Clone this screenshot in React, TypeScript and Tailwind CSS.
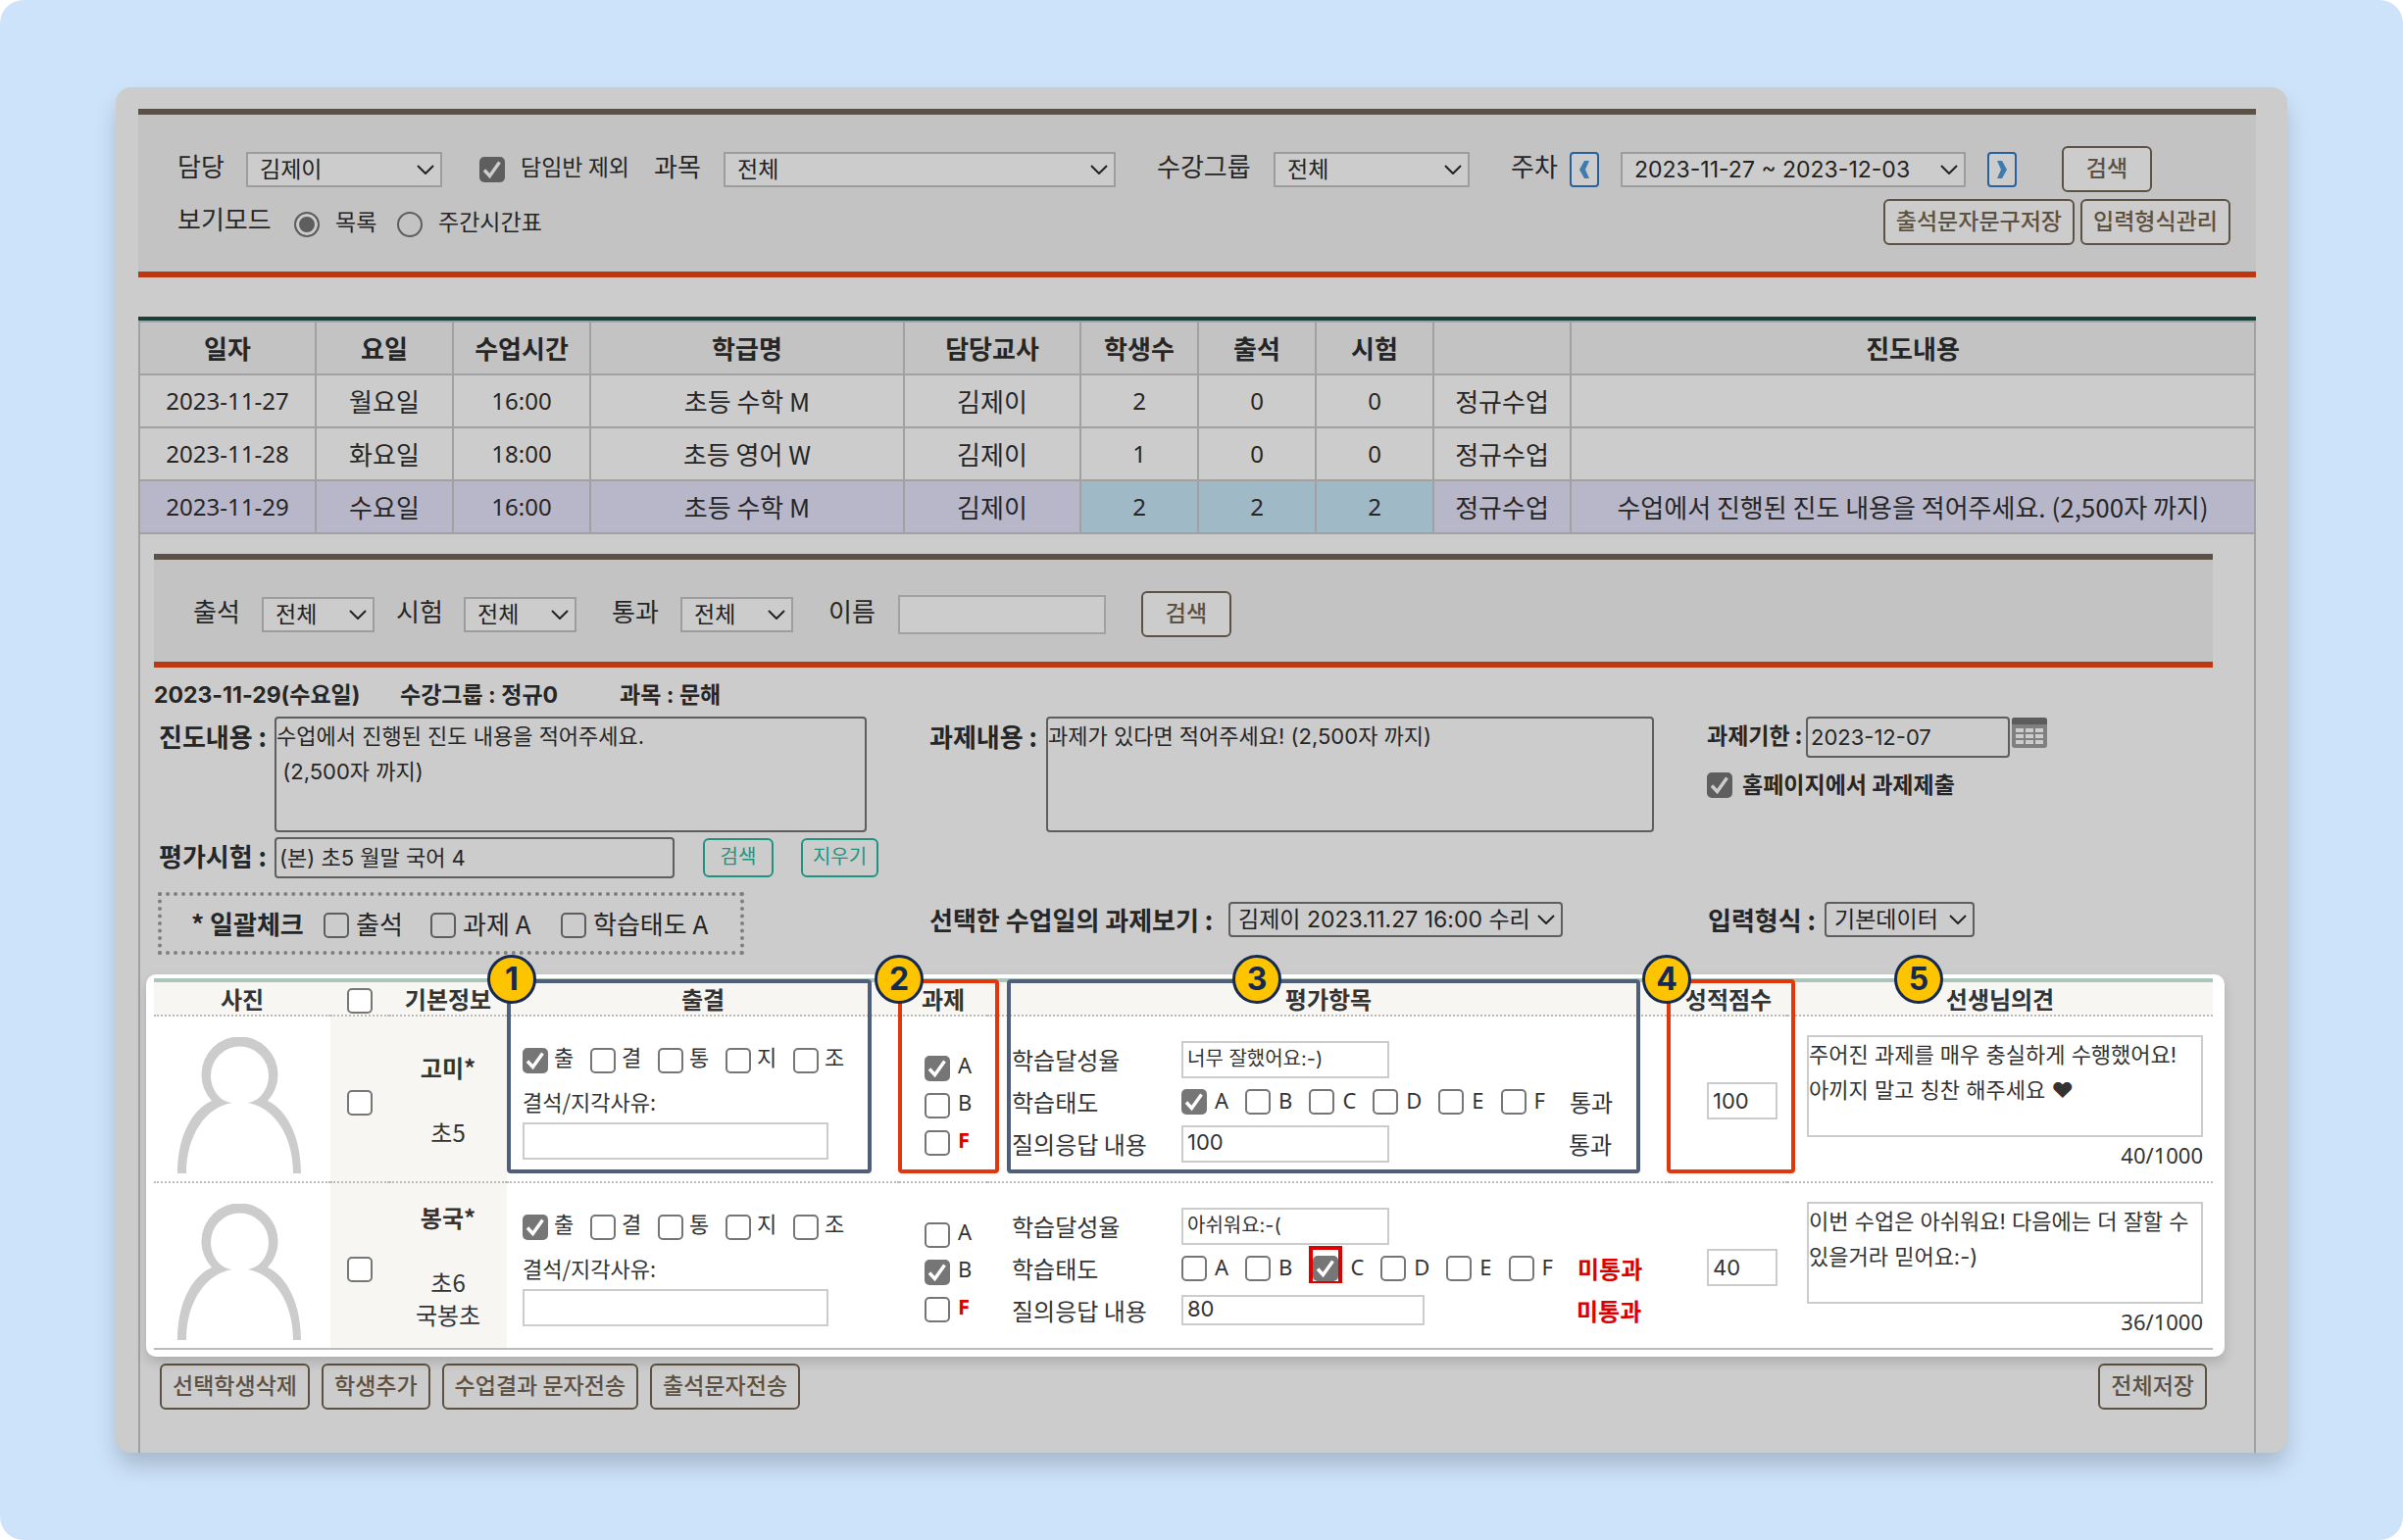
import React from "react";

const ui = "font-['Inter','Noto_Sans_CJK_KR',sans-serif]";

type Tone = "dim" | "light";

function Check({
  label,
  checked,
  tone = "light",
  className = "",
}: {
  label: string;
  checked?: boolean;
  tone?: Tone;
  className?: string;
}) {
  const look =
    tone === "dim"
      ? "border-[#5e5e5e] checked:bg-[#5e5e5e]"
      : "border-[#767676] bg-white checked:bg-[#767676]";
  return (
    <span className={`relative block size-[26px] shrink-0 ${className}`}>
      <input
        type="checkbox"
        aria-label={label}
        defaultChecked={checked}
        className={`peer block size-[26px] appearance-none rounded-[5px] border-2 ${look}`}
      />
      <svg
        viewBox="0 0 26 26"
        className={`pointer-events-none absolute inset-0 hidden peer-checked:block ${
          tone === "dim" ? "text-[#cccccc]" : "text-white"
        }`}
        fill="none"
        stroke="currentColor"
        strokeWidth="3.4"
      >
        <path d="M5 13.5 10.5 19.5 20.5 5.5" />
      </svg>
    </span>
  );
}

function Picker({
  label,
  value,
  className,
  pad = "pl-3",
}: {
  label: string;
  value: string;
  className: string;
  pad?: string;
}) {
  return (
    <span className={`relative block shrink-0 ${className}`}>
      <select
        aria-label={label}
        defaultValue={value}
        className={`block size-full appearance-none rounded-[inherit] border-2 border-inherit bg-[#cccccc] ${pad} ${ui} text-[23px] leading-8 text-[#222222]`}
      >
        <option>{value}</option>
      </select>
      <svg
        viewBox="0 0 18 10"
        className="pointer-events-none absolute top-[13px] right-2 h-[10px] w-[18px]"
        fill="none"
        stroke="#222222"
        strokeWidth="2"
      >
        <path d="M1 1 9 9 17 1" />
      </svg>
    </span>
  );
}

function BrownButton({ children, wide }: { children: React.ReactNode; wide?: boolean }) {
  return (
    <button
      type="button"
      className={`h-[47px] shrink-0 rounded-[6px] border-2 border-[#5d5143] bg-[#cccccc] pb-[6px] text-[23px] font-medium leading-8 text-[#5d5143] ${
        wide ? "w-[92px]" : "px-[11px]"
      }`}
    >
      {children}
    </button>
  );
}

function WeekButton({ label, d, className = "" }: { label: string; d: string; className?: string }) {
  return (
    <button
      type="button"
      aria-label={label}
      className={`grid h-[36px] w-[30px] shrink-0 place-items-center rounded-[4px] border-2 border-[#27619e] bg-[#cccccc] ${className}`}
    >
      <svg viewBox="0 0 16 20" className="h-5 w-4" fill="#3f7bb0">
        <path d={d} />
      </svg>
    </button>
  );
}

function Cap({ children, className }: { children: React.ReactNode; className: string }) {
  return <span className={`shrink-0 whitespace-nowrap pb-2 text-[26px] leading-8 ${className}`}>{children}</span>;
}

function SearchBar() {
  return (
    <form className="border-y-6 border-t-[#5c5146] border-b-[#bc390f] bg-[#c3c3c3] pt-8 pr-[26px] pb-[27px] pl-10">
      <div className="flex h-[47px] items-center">
        <Cap className="w-[70px]">담당</Cap>
        <Picker label="담당" value="김제이" className="h-9 w-[200px] border-[#9d9d9d]" />
        <label className="ml-[38px] flex w-[178px] shrink-0 items-center">
          <Check label="담임반 제외" checked tone="dim" />
          <span className="ml-4 pb-2 text-[23px] leading-8 whitespace-nowrap">담임반 제외</span>
        </label>
        <Cap className="w-[71px]">과목</Cap>
        <Picker label="과목" value="전체" className="h-9 w-[400px] border-[#9d9d9d]" />
        <Cap className="ml-[42px] w-[119px]">수강그룹</Cap>
        <Picker label="수강그룹" value="전체" className="h-9 w-[200px] border-[#9d9d9d]" />
        <Cap className="ml-[42px] w-[60px]">주차</Cap>
        <WeekButton label="이전 주" d="M8 1H13L9 10L13 19H8L3 10Z" />
        <Picker label="주차" value="2023-11-27 ~ 2023-12-03" className="mx-[22px] h-9 w-[352px] border-[#9d9d9d]" />
        <WeekButton label="다음 주" d="M8 1H3L7 10L3 19H8L13 10Z" className="mr-[46px]" />
        <BrownButton wide>검색</BrownButton>
      </div>
      <div className="mt-[7px] flex h-[47px] items-center">
        <Cap className="w-[119px]">보기모드</Cap>
        <label className="flex items-center">
          <input
            type="radio"
            name="view"
            defaultChecked
            className="mt-1 size-[26px] appearance-none rounded-full border-2 border-[#5e5e5e] checked:bg-[#5e5e5e] checked:shadow-[inset_0_0_0_3px_#cccccc]"
          />
          <span className="ml-4 w-[63px] pb-1 text-[23px] leading-8">목록</span>
        </label>
        <label className="flex items-center">
          <input
            type="radio"
            name="view"
            className="mt-1 size-[26px] appearance-none rounded-full border-2 border-[#5e5e5e] checked:bg-[#5e5e5e] checked:shadow-[inset_0_0_0_3px_#cccccc]"
          />
          <span className="ml-4 pb-1 text-[23px] leading-8">주간시간표</span>
        </label>
        <div className="ml-auto flex gap-[6px]">
          <BrownButton>출석문자문구저장</BrownButton>
          <BrownButton>입력형식관리</BrownButton>
        </div>
      </div>
    </form>
  );
}

const lessonHeads = ["일자", "요일", "수업시간", "학급명", "담당교사", "학생수", "출석", "시험", "", "진도내용"];
const lessons = [
  ["2023-11-27", "월요일", "16:00", "초등 수학 M", "김제이", "2", "0", "0", "정규수업", ""],
  ["2023-11-28", "화요일", "18:00", "초등 영어 W", "김제이", "1", "0", "0", "정규수업", ""],
  [
    "2023-11-29",
    "수요일",
    "16:00",
    "초등 수학 M",
    "김제이",
    "2",
    "2",
    "2",
    "정규수업",
    "수업에서 진행된 진도 내용을 적어주세요. (2,500자 까지)",
  ],
];

function LessonTable() {
  return (
    <div className="mt-10 border-t-4 border-[#1a403a]">
      <table className="w-full table-fixed border-collapse text-center text-[26px] leading-8">
        <colgroup>
          <col className="w-[180px]" />
          <col className="w-[140px]" />
          <col className="w-[140px]" />
          <col className="w-[320px]" />
          <col className="w-[180px]" />
          <col className="w-[120px]" />
          <col className="w-[120px]" />
          <col className="w-[120px]" />
          <col className="w-[140px]" />
          <col />
        </colgroup>
        <thead>
          <tr className="h-[54px] bg-[#c3c3c3]">
            {lessonHeads.map((h, i) => (
              <th key={i} className="border-2 border-[#a1a1a1] p-0 font-bold">
                {h}
              </th>
            ))}
          </tr>
        </thead>
        <tbody>
          {lessons.map((row, r) => (
            <tr key={r} className={r === 2 ? "h-[54px] bg-[#b8b6c9]" : "h-[54px]"}>
              {row.map((cell, c) => (
                <td
                  key={c}
                  className={`border-2 border-[#a1a1a1] p-0 whitespace-nowrap ${
                    /^[\d:-]+$/.test(cell) ? "font-['Noto_Sans',sans-serif] text-[24px]" : ""
                  } ${r === 2 && c > 4 && c < 8 ? "bg-[#a0b9c7]" : ""}`}
                >
                  {cell}
                </td>
              ))}
            </tr>
          ))}
        </tbody>
      </table>
    </div>
  );
}

function FilterBar() {
  return (
    <form className="border-y-6 border-t-[#5c5146] border-b-[#bc390f] bg-[#c3c3c3] pt-8 pb-[25px] pl-10">
      <div className="flex h-[47px] items-center">
        <Cap className="w-[70px]">출석</Cap>
        <Picker label="출석" value="전체" className="h-9 w-[115px] border-[#9d9d9d]" />
        <Cap className="ml-[22px] w-[69px]">시험</Cap>
        <Picker label="시험" value="전체" className="h-9 w-[115px] border-[#9d9d9d]" />
        <Cap className="ml-9 w-[70px]">통과</Cap>
        <Picker label="통과" value="전체" className="h-9 w-[115px] border-[#9d9d9d]" />
        <Cap className="ml-9 w-[71px]">이름</Cap>
        <input aria-label="이름" className="mr-9 h-10 w-[212px] border-2 border-[#a1a1a1] bg-[#cccccc] px-1 text-[23px]" />
        <BrownButton wide>검색</BrownButton>
      </div>
    </form>
  );
}

function CalendarIcon() {
  return (
    <svg viewBox="0 0 36 31" className="h-[31px] w-9">
      <rect width="36" height="31" rx="3" fill="#808080" />
      <path d="M0 3a3 3 0 0 1 3-3h30a3 3 0 0 1 3 3v4H0z" fill="#5c5c5c" />
      {[11, 17, 23].map((y) =>
        [4, 14, 24].map((x) => <rect key={`${x}-${y}`} x={x} y={y} width="8" height="4" fill="#cccccc" />),
      )}
    </svg>
  );
}

const boldCap = "shrink-0 whitespace-nowrap text-[26px] font-bold leading-8";
const darkField = `block shrink-0 resize-none rounded-[4px] border-2 border-[#5e5e5e] bg-transparent ${ui}`;
const tealButton =
  "h-10 rounded-[6px] border-2 border-[#1e9480] pb-1 text-[20px] leading-7 text-[#1e9480]";

function LessonDetail() {
  return (
    <div>
      <div className={`flex h-[50px] items-center pt-[6px] ${ui} text-[23px] leading-8 font-bold whitespace-nowrap`}>
        <span className="w-[251px]">2023-11-29(수요일)</span>
        <span className="w-[224px]">수강그룹 : 정규0</span>
        <span>과목 : 문해</span>
      </div>
      <div className="flex items-start pl-[5px]">
        <label htmlFor="progress" className={`${boldCap} w-[118px] pt-1`}>
          진도내용 :
        </label>
        <textarea
          id="progress"
          defaultValue={"수업에서 진행된 진도 내용을 적어주세요.\n (2,500자 까지)"}
          className={`${darkField} h-[118px] w-[604px] text-[22px] leading-9`}
        />
        <label htmlFor="homework" className={`${boldCap} ml-16 w-[119px] pt-1`}>
          과제내용 :
        </label>
        <textarea
          id="homework"
          defaultValue="과제가 있다면 적어주세요! (2,500자 까지)"
          className={`${darkField} h-[118px] w-[620px] text-[22px] leading-9`}
        />
        <div className="ml-[54px] text-[23px] font-bold">
          <div className="flex items-start">
            <label htmlFor="due" className="w-[101px] pt-1 leading-7 whitespace-nowrap">
              과제기한 :
            </label>
            <input
              id="due"
              defaultValue="2023-12-07"
              className={`${darkField} h-[42px] w-[208px] px-[3px] text-[22px] font-normal`}
            />
            <button type="button" aria-label="달력" className="ml-[2px] pt-px">
              <CalendarIcon />
            </button>
          </div>
          <label className="mt-3 flex items-center">
            <Check label="홈페이지에서 과제제출" checked tone="dim" />
            <span className="ml-[10px] pb-1 leading-7 whitespace-nowrap">홈페이지에서 과제제출</span>
          </label>
        </div>
      </div>
      <div className="mt-[5px] flex h-[42px] items-center pl-[5px]">
        <label htmlFor="exam" className={`${boldCap} w-[118px] pb-1`}>
          평가시험 :
        </label>
        <input
          id="exam"
          defaultValue="(본) 초5 월말 국어 4"
          className={`${darkField} h-[42px] w-[408px] px-[3px] pb-1 text-[22px]`}
        />
        <button type="button" className={`${tealButton} mr-7 ml-[29px] w-[72px]`}>
          검색
        </button>
        <button type="button" className={`${tealButton} w-[79px]`}>
          지우기
        </button>
      </div>
      <div className="mt-[14px] flex items-start pl-1">
        <div className="flex h-16 w-[598px] shrink-0 items-center border-4 border-dotted border-[#7f7f7f] pl-[30px] text-[26px] leading-8 whitespace-nowrap">
          <span className="w-[135px] font-bold">* 일괄체크</span>
          <label className="flex w-[109px] items-center gap-[7px]">
            <Check label="출석" tone="dim" className="mt-1" />
            출석
          </label>
          <label className="flex w-[133px] items-center gap-[7px]">
            <Check label="과제 A" tone="dim" className="mt-1" />
            과제 A
          </label>
          <label className="flex items-center gap-[7px]">
            <Check label="학습태도 A" tone="dim" className="mt-1" />
            학습태도 A
          </label>
        </div>
        <div className="mt-[10px] ml-[189px] flex items-center">
          <span className={`${boldCap} w-[305px]`}>선택한 수업일의 과제보기 :</span>
          <Picker
            label="선택한 수업일의 과제보기"
            value="김제이 2023.11.27 16:00 수리"
            className="h-9 w-[341px] rounded-[4px] border-[#5e5e5e]"
            pad="pl-2"
          />
          <span className={`${boldCap} ml-[148px] w-[119px]`}>입력형식 :</span>
          <Picker
            label="입력형식"
            value="기본데이터"
            className="h-9 w-[153px] rounded-[4px] border-[#5e5e5e]"
            pad="pl-2"
          />
        </div>
      </div>
    </div>
  );
}

type Student = {
  name: string;
  info: string[];
  homework: string;
  achievement: string;
  attitude: string;
  answer: string;
  result: string;
  failed: boolean;
  score: string;
  comment: string;
  count: string;
};

const students: Student[] = [
  {
    name: "고미*",
    info: ["초5"],
    homework: "A",
    achievement: "너무 잘했어요:-)",
    attitude: "A",
    answer: "100",
    result: "통과",
    failed: false,
    score: "100",
    comment: "주어진 과제를 매우 충실하게 수행했어요!\n아끼지 말고 칭찬 해주세요 ♥",
    count: "40/1000",
  },
  {
    name: "봉국*",
    info: ["초6", "국봉초"],
    homework: "B",
    achievement: "아쉬워요:-(",
    attitude: "C",
    answer: "80",
    result: "미통과",
    failed: true,
    score: "40",
    comment: "이번 수업은 아쉬워요! 다음에는 더 잘할 수 있을거라 믿어요:-)",
    count: "36/1000",
  },
];

function Avatar() {
  return (
    <svg viewBox="0 0 127 139" className="h-[139px] w-[127px]" fill="#cccccc">
      <path d="M1 139C1 104 14 75 36 65A39 39 0 1 1 93 65C114 75 127 104 127 139H119C119 100 99 71 72 67C85 66 94 53 94 39A29.5 29.5 0 0 0 35 39C35 53 44 66 57 67C30 71 10 100 10 139Z" />
    </svg>
  );
}

const paleField = `block border-2 border-[#cccccc] bg-white ${ui} text-[#333333]`;
const letter = "font-['Noto_Sans',sans-serif] text-[22px] leading-6";

function StudentRow({ s, last }: { s: Student; last: boolean }) {
  const cell = last ? "border-b-2 border-[#bbbbbb] p-0" : "border-b-2 border-dotted border-[#bbbbbb] p-0";
  const result = s.failed ? "font-bold text-[#dd0000]" : "";
  return (
    <tr className="h-[170px]">
      <td className={`${cell} align-bottom`}>
        <div className="pb-2 pl-[23px]">
          <Avatar />
        </div>
      </td>
      <td className={`${cell} bg-[#f7f6f2]`}>
        <Check label={`${s.name} 선택`} className="mx-auto mt-2" />
      </td>
      <td className={`${cell} bg-[#f7f6f2] text-center leading-[33px]`}>
        <div className="font-bold">{s.name}</div>
        <div className="pt-[33px]">
          {s.info.map((t) => (
            <div key={t}>{t}</div>
          ))}
        </div>
      </td>
      <td className={`${cell} align-top`}>
        <div className="pt-8 pl-4 text-[22px]">
          <div className="flex gap-[10px]">
            {["출", "결", "통", "지", "조"].map((t, i) => (
              <label key={t} className="flex w-[59px] gap-[6px] leading-4">
                <Check label={t} checked={i === 0} />
                {t}
              </label>
            ))}
          </div>
          <label className="mt-[11px] block w-[312px]">
            <span className="block pb-1 leading-[35px]">결석/지각사유:</span>
            <input className={`${paleField} h-[38px] w-full px-1 text-[22px]`} />
          </label>
        </div>
      </td>
      <td className={`${cell} align-top`}>
        <div className="flex flex-col gap-3 pt-10 pl-[26px]">
          {["A", "B", "F"].map((t) => (
            <label key={t} className={`flex h-[26px] gap-2 ${letter} ${t === "F" ? "font-bold text-[#dd0000]" : ""}`}>
              <Check label={`과제 ${t}`} checked={s.homework === t} />
              <span className="-mt-[3px]">{t}</span>
            </label>
          ))}
        </div>
      </td>
      <td className={`${cell} align-top`}>
        <div className="pt-[22px] pl-[25px] whitespace-nowrap">
          <div className="flex h-[43px] items-center">
            <span className="w-[173px]">학습달성율</span>
            <input
              aria-label="학습달성율"
              defaultValue={s.achievement}
              className={`${paleField} h-[38px] w-[212px] px-1 pb-1 text-[20px]`}
            />
          </div>
          <div className="flex h-[43px] items-center">
            <span className="w-[173px]">학습태도</span>
            {["A", "B", "C", "D", "E", "F"].map((t) => {
              const flagged = s.failed && s.attitude === t;
              return (
                <label key={t} className="mr-[17px] flex items-center gap-2">
                  <span className={flagged ? "-mt-2 border-4 border-b-2 border-[#dd0000] pt-[6px]" : ""}>
                    <Check label={`학습태도 ${t}`} checked={s.attitude === t} />
                  </span>
                  <span className={`${letter} pb-1`}>{t}</span>
                </label>
              );
            })}
            <span className={`ml-2 ${result}`}>{s.result}</span>
          </div>
          <div className="flex h-[43px] items-center">
            <span className="w-[173px]">질의응답 내용</span>
            <span className={s.failed ? "w-[403px]" : "w-[395px]"}>
              <input
                aria-label="질의응답 내용"
                defaultValue={s.answer}
                className={`${paleField} px-1 pb-1 text-[22px] ${s.failed ? "h-[31px] w-[248px]" : "h-[38px] w-[212px]"}`}
              />
            </span>
            <span className={result}>{s.result}</span>
          </div>
        </div>
      </td>
      <td className={cell}>
        <input
          aria-label="성적점수"
          defaultValue={s.score}
          className={`${paleField} mt-1 ml-[38px] h-[38px] w-[72px] px-1 text-[22px]`}
        />
      </td>
      <td className={`${cell} align-top`}>
        <div className="pt-[19px] pr-[10px] pl-5">
          <textarea
            aria-label="선생님의견"
            defaultValue={s.comment}
            className={`${paleField} h-[104px] w-full resize-none text-[22px] leading-9`}
          />
          <div className="text-right font-['Noto_Sans',sans-serif] text-[22px] leading-9">{s.count}</div>
        </div>
      </td>
    </tr>
  );
}

function Badge({ n, className }: { n: number; className: string }) {
  return (
    <span
      className={`absolute grid size-[50px] place-items-center rounded-full border-3 border-[#16294e] bg-[#ffc400] font-['Inter',sans-serif] text-[32px] leading-none font-bold text-[#16294e] ${className}`}
    >
      {n}
    </span>
  );
}

function StudentPanel() {
  return (
    <section className="relative mt-5 -mr-3 -ml-2 rounded-[10px] bg-white pt-1 pr-3 pb-[7px] pl-2 text-[#333333] shadow-[0_6px_12px_rgba(0,0,0,0.15)]">
      <div className="border-t-4 border-[#adc4ba]">
        <table className="w-full table-fixed border-separate border-spacing-0 text-[24px] leading-8">
          <colgroup>
            <col className="w-[180px]" />
            <col className="w-[60px]" />
            <col className="w-[120px]" />
            <col className="w-[400px]" />
            <col className="w-[90px]" />
            <col className="w-[696px]" />
            <col className="w-[120px]" />
            <col />
          </colgroup>
          <thead>
            <tr className="h-[35px] bg-[#f7f6f3]">
              {["사진", "", "기본정보", "출결", "과제", "평가항목", "성적점수", "선생님의견"].map((h, i) => (
                <th key={i} className="border-b-2 border-dotted border-[#bbbbbb] p-0 font-bold whitespace-nowrap">
                  {i === 1 ? <Check label="전체 선택" className="mx-auto mt-1" /> : h}
                </th>
              ))}
            </tr>
          </thead>
          <tbody>
            {students.map((s, i) => (
              <StudentRow key={s.name} s={s} last={i === students.length - 1} />
            ))}
          </tbody>
        </table>
      </div>
      <div className="pointer-events-none absolute top-[5px] left-[368px] h-[198px] w-[372px] rounded-[4px] border-4 border-[#4f5f7b]" />
      <div className="pointer-events-none absolute top-[5px] left-[767px] h-[198px] w-[103px] rounded-[4px] border-4 border-[#e2360d]" />
      <div className="pointer-events-none absolute top-[5px] left-[878px] h-[198px] w-[646px] rounded-[4px] border-4 border-[#4f5f7b]" />
      <div className="pointer-events-none absolute top-[5px] left-[1551px] h-[198px] w-[131px] rounded-[4px] border-4 border-[#e2360d]" />
      <Badge n={1} className="-top-5 left-[348px]" />
      <Badge n={2} className="-top-5 left-[743px]" />
      <Badge n={3} className="-top-5 left-[1108px]" />
      <Badge n={4} className="-top-5 left-[1526px]" />
      <Badge n={5} className="-top-5 left-[1783px]" />
    </section>
  );
}

export default function App() {
  return (
    <div className="bg-white">
      <div className="min-h-screen rounded-[24px] bg-[#cde3fa] px-[118px] pt-[89px] pb-[89px] font-['Noto_Sans_CJK_KR',sans-serif]">
        <main className="rounded-[16px] bg-[#cccccc] pt-[22px] pr-8 pl-[23px] text-[#262626] shadow-[0_14px_24px_-2px_rgba(0,0,0,0.2)]">
          <SearchBar />
          <LessonTable />
          <div className="border-x-2 border-[#a1a1a1] pt-5 pr-[42px] pb-[44px] pl-[14px]">
            <FilterBar />
            <LessonDetail />
            <StudentPanel />
            <div className="mt-[7px] flex gap-3 px-[6px]">
              <BrownButton>선택학생삭제</BrownButton>
              <BrownButton>학생추가</BrownButton>
              <BrownButton>수업결과 문자전송</BrownButton>
              <BrownButton>출석문자전송</BrownButton>
              <div className="ml-auto">
                <BrownButton>전체저장</BrownButton>
              </div>
            </div>
          </div>
        </main>
      </div>
    </div>
  );
}
